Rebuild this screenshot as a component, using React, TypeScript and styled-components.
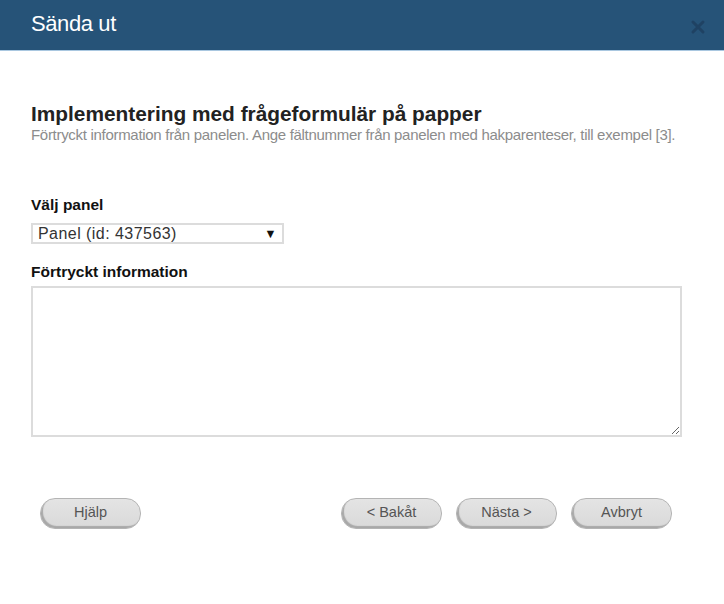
import React from "react";
import styled, { createGlobalStyle } from "styled-components";

const Global = createGlobalStyle`
  html, body { margin: 0; padding: 0; background: #fff; }
  body { font-family: "Liberation Sans", Arial, sans-serif; }
`;

const Dialog = styled.div`
  width: 724px;
  height: 604px;
  display: flex;
  flex-direction: column;
  background: #fff;
`;

const Header = styled.div`
  height: 50px;
  background: #265378;
  border-bottom: 1px solid #a9c7e0;
  display: flex;
  align-items: center;
  justify-content: space-between;
  padding: 0 18px 0 31px;
  box-sizing: content-box;
`;

const Title = styled.h1`
  margin: 0;
  margin-top: -2px;
  color: #fff;
  font-size: 22px;
  font-weight: normal;
  letter-spacing: -0.4px;
`;

const Close = styled.button`
  border: none;
  background: transparent;
  padding: 0;
  width: 16px;
  height: 16px;
  display: flex;
  margin-top: 3px;
  cursor: pointer;
`;

const Body = styled.div`
  display: flex;
  flex-direction: column;
  padding: 51px 42px 0 31px;
`;

const Heading = styled.h2`
  margin: 0;
  font-size: 20.85px;
  font-weight: bold;
  color: #222;
  line-height: 24px;
`;

const Sub = styled.p`
  margin: 0;
  font-size: 15px;
  color: #8c8c8c;
  line-height: 17px;
  letter-spacing: -0.3px;
`;

const Label = styled.label<{ $top: number }>`
  display: block;
  font-size: 15.5px;
  font-weight: bold;
  color: #111;
  line-height: 18px;
  margin-top: ${(p) => p.$top}px;
`;

const Select = styled.div`
  margin-top: 9px;
  width: 253px;
  height: 21px;
  box-sizing: border-box;
  border: 2px solid #dcdcdc;
  display: flex;
  align-items: center;
  justify-content: space-between;
  padding: 0 5px 0 5px;
  font-size: 16px;
  color: #333;
  letter-spacing: 0.45px;
`;

const Arrow = styled.span`
  font-size: 12.5px;
  color: #111;
`;

const TextArea = styled.textarea`
  margin-top: 5px;
  width: 651px;
  height: 151px;
  box-sizing: border-box;
  border: 2px solid #dcdcdc;
  font-family: inherit;
  font-size: 14px;
  outline: none;
  resize: both;
`;

const Footer = styled.div`
  display: flex;
  align-items: center;
  padding: 61px 52px 0 40px;
  gap: 14px;
`;

const Spacer = styled.div`
  flex: 1;
`;

const Button = styled.button`
  width: 101px;
  height: 31px;
  border-radius: 15px;
  border: 1px solid #b4b4b4;
  background: linear-gradient(#e4e4e4, #d9d9d9);
  box-shadow: inset 2px -2px 1px #a8a8a8;
  font-family: "Liberation Sans", Arial, sans-serif;
  font-size: 14.5px;
  color: #555;
  padding: 0 0 3px 0;
  cursor: pointer;
`;

export default function App() {
  return (
    <>
      <Global />
      <Dialog>
        <Header>
          <Title>Sända ut</Title>
          <Close aria-label="Stäng">
            <svg width="16" height="16" viewBox="0 0 16 16">
              <path d="M3 3 L13 13 M13 3 L3 13" stroke="#1f4263" strokeWidth="3" strokeLinecap="round" />
            </svg>
          </Close>
        </Header>
        <Body>
          <Heading>Implementering med frågeformulär på papper</Heading>
          <Sub>Förtryckt information från panelen. Ange fältnummer från panelen med hakparenteser, till exempel [3].</Sub>
          <Label $top={53}>Välj panel</Label>
          <Select>
            <span>Panel (id: 437563)</span>
            <Arrow>▼</Arrow>
          </Select>
          <Label $top={19}>Förtryckt information</Label>
          <TextArea />
        </Body>
        <Footer>
          <Button>Hjälp</Button>
          <Spacer />
          <Button>&lt; Bakåt</Button>
          <Button>Nästa &gt;</Button>
          <Button>Avbryt</Button>
        </Footer>
      </Dialog>
    </>
  );
}
